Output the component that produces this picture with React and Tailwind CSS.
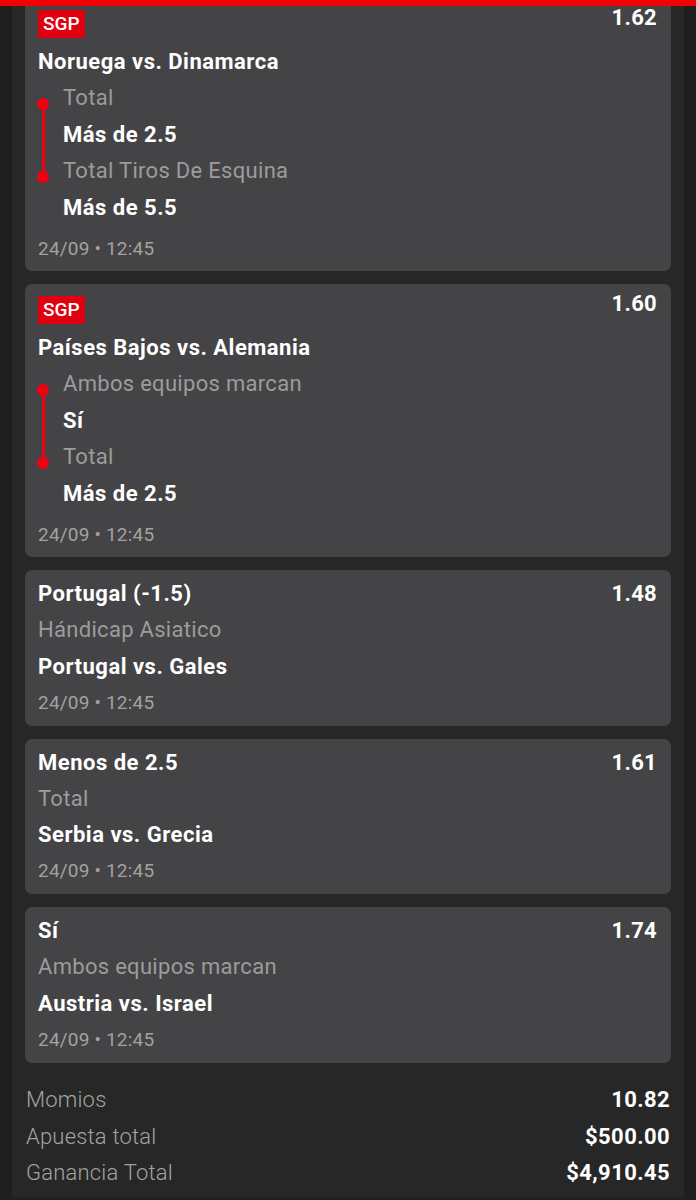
const FONT = { fontFamily: "Roboto, 'Liberation Sans', sans-serif" };

const BETS = [
  {
    sgp: true,
    odds: "1.62",
    match: "Noruega vs. Dinamarca",
    legs: [
      { market: "Total", pick: "Más de 2.5" },
      { market: "Total Tiros De Esquina", pick: "Más de 5.5" },
    ],
    first: true,
  },
  {
    sgp: true,
    odds: "1.60",
    match: "Países Bajos vs. Alemania",
    legs: [
      { market: "Ambos equipos marcan", pick: "Sí" },
      { market: "Total", pick: "Más de 2.5" },
    ],
  },
  { pick: "Portugal (-1.5)", odds: "1.48", market: "Hándicap Asiatico", match: "Portugal vs. Gales" },
  { pick: "Menos de 2.5", odds: "1.61", market: "Total", match: "Serbia vs. Grecia" },
  { pick: "Sí", odds: "1.74", market: "Ambos equipos marcan", match: "Austria vs. Israel" },
];

const TOTALS = [
  { label: "Momios", value: "10.82" },
  { label: "Apuesta total", value: "$500.00" },
  { label: "Ganancia Total", value: "$4,910.45" },
];

export default function App() {
  return (
    <div className="relative w-[696px] h-[1200px] overflow-hidden bg-[#1f1f1f]" style={FONT}>
      {/* red header edge */}
      <div className="absolute top-0 left-0 right-0 h-[6px] bg-[#f50000] z-10" />

      <div className="mx-[12px] h-[1197px] bg-[#272727] px-[13px] flex flex-col gap-[13px]">
        {BETS.map((b, i) => (b.sgp ? <SgpCard key={i} bet={b} /> : <SingleCard key={i} bet={b} />))}

        {/* totals */}
        <div className="pt-[6px] px-px">
          {TOTALS.map((t) => (
            <div key={t.label} className="flex justify-between items-center h-[36.5px]">
              <span className="text-[22px] text-[#a3a3a3] font-light tracking-[0.2px]">{t.label}</span>
              <span className="text-[22px] font-bold text-white tracking-[0.4px]">{t.value}</span>
            </div>
          ))}
        </div>
      </div>
    </div>
  );
}

function SgpCard({ bet }) {
  return (
    <div className={`bg-[#444345] rounded-[7px] pl-[13px] pr-[14px] pb-[4px] ${bet.first ? "-mt-[2px] pt-[12px]" : "pt-[12px]"}`}>
      <div className="flex justify-between items-start">
        <span className="bg-[#e0000f] text-white text-[19px] leading-[28px] px-[5px] font-medium">SGP</span>
        <span className="text-[22px] font-bold text-white leading-[22px] mt-[-3px] tracking-[0.3px]">{bet.odds}</span>
      </div>
      <div className="mt-[6px] text-[22px] font-bold text-white leading-[36px] tracking-[0.5px]">{bet.match}</div>

      <div className="relative">
        {/* leg connector */}
        <div className="absolute left-[-1px] top-[18px] w-[12px] h-[12px] rounded-full bg-[#f00010]" />
        <div className="absolute left-[4px] top-[24px] w-[3px] h-[73px] bg-[#f00010]" />
        <div className="absolute left-[-1px] top-[91px] w-[12px] h-[12px] rounded-full bg-[#f00010]" />
        {bet.legs.map((l) => (
          <div key={l.market} className="pl-[25px]">
            <div className="text-[22px] text-[#9c9c9c] leading-[36.5px] tracking-[0.3px]">{l.market}</div>
            <div className="text-[22px] font-bold text-white leading-[36.5px] tracking-[0.5px]">{l.pick}</div>
          </div>
        ))}
      </div>

      <div className="mt-[5px] text-[19px] text-[#a2a2a2] leading-[36px] tracking-[0.2px]">24/09 • 12:45</div>
    </div>
  );
}

function SingleCard({ bet }) {
  return (
    <div className="bg-[#444345] rounded-[7px] pl-[13px] pr-[14px] pt-[6px] pb-[5px]">
      <div className="flex justify-between items-center leading-[36px]">
        <span className="text-[22px] font-bold text-white tracking-[0.5px]">{bet.pick}</span>
        <span className="text-[22px] font-bold text-white tracking-[0.3px]">{bet.odds}</span>
      </div>
      <div className="text-[22px] text-[#9c9c9c] leading-[36.5px] tracking-[0.3px]">{bet.market}</div>
      <div className="text-[22px] font-bold text-white leading-[36px] tracking-[0.5px]">{bet.match}</div>
      <div className="text-[19px] text-[#a2a2a2] leading-[36px] tracking-[0.2px]">24/09 • 12:45</div>
    </div>
  );
}
